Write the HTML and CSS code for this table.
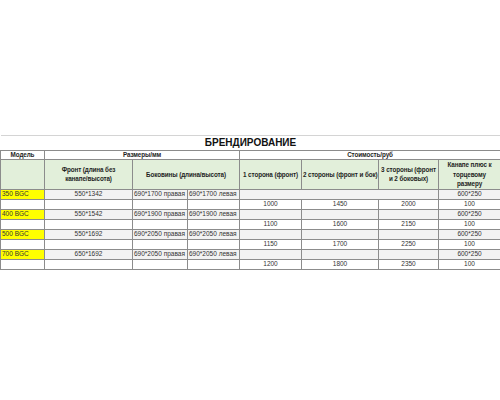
FILE: index.html
```html
<!DOCTYPE html>
<html>
<head>
<meta charset="utf-8">
<link rel="stylesheet" href="styles.css">
</head>
<body>
<div class="page">
<table class="sheet">
<colgroup>
<col class="c1"><col class="c2"><col class="c3"><col class="c4"><col class="c5"><col class="c6"><col class="c7"><col class="c8">
</colgroup>
<tr class="r-title"><td colspan="8" class="title">БРЕНДИРОВАНИЕ</td></tr>
<tr class="r-h1">
<td class="h">Модель</td>
<td class="h" colspan="3">Размеры/мм</td>
<td class="h" colspan="4">Стоимость/руб</td>
</tr>
<tr class="r-h2">
<td class="h g"></td>
<td class="h g">Фронт (длина без<br>канапе/высота)</td>
<td class="h g" colspan="2">Боковины (длина/высота)</td>
<td class="h g">1 сторона (фронт)</td>
<td class="h g">2 стороны (фронт и бок)</td>
<td class="h g">3 стороны (фронт<br>и 2 боковых)</td>
<td class="h g">Канапе плюс к<br>торцевому<br>размеру</td>
</tr>
<tr class="r-a">
<td class="m">350 BGC</td><td class="s c">550*1342</td><td class="s l">690*1700 правая</td><td class="s l">690*1700 левая</td><td class="s" colspan="3"></td><td class="s c">600*250</td>
</tr>
<tr class="r-b">
<td></td><td></td><td></td><td></td><td class="c">1000</td><td class="c">1450</td><td class="c lo">2000</td><td class="c">100</td>
</tr>
<tr class="r-a">
<td class="m">400 BGC</td><td class="s c">550*1542</td><td class="s l">690*1900 правая</td><td class="s l">690*1900 левая</td><td class="s"></td><td class="s"></td><td class="s"></td><td class="s c">600*250</td>
</tr>
<tr class="r-b">
<td></td><td></td><td></td><td></td><td class="c">1100</td><td class="c">1600</td><td class="c lo">2150</td><td class="c">100</td>
</tr>
<tr class="r-a">
<td class="m">500 BGC</td><td class="s c">550*1692</td><td class="s l">690*2050 правая</td><td class="s l">690*2050 левая</td><td class="s"></td><td class="s"></td><td class="s"></td><td class="s c">600*250</td>
</tr>
<tr class="r-b">
<td></td><td></td><td></td><td></td><td class="c">1150</td><td class="c">1700</td><td class="c lo">2250</td><td class="c">100</td>
</tr>
<tr class="r-a">
<td class="m">700 BGC</td><td class="s c">650*1692</td><td class="s l">690*2050 правая</td><td class="s l">690*2050 левая</td><td class="s"></td><td class="s"></td><td class="s"></td><td class="s c">600*250</td>
</tr>
<tr class="r-b">
<td></td><td></td><td></td><td></td><td class="c">1200</td><td class="c">1800</td><td class="c lo">2350</td><td class="c">100</td>
</tr>
</table>
</div>
</body>
</html>
```
FILE: styles.css
```css
html, body {
  margin: 0;
  padding: 0;
  background: #ffffff;
}
.page {
  width: 500px;
  height: 400px;
  padding-top: 135px;
  box-sizing: border-box;
}
.sheet {
  width: 500px;
  border-collapse: collapse;
  table-layout: fixed;
  font-family: "Liberation Sans", Arial, sans-serif;
  font-size: 6.5px;
  color: #333333;
}
.c1 { width: 44px; }
.c2 { width: 88px; }
.c3 { width: 55px; }
.c4 { width: 52px; }
.c5 { width: 62px; }
.c6 { width: 77px; }
.c7 { width: 60px; }
.c8 { width: 62px; }
.sheet td {
  border: 1px solid #8c8c8c;
  padding: 0 1px;
  line-height: 8px;
  white-space: nowrap;
  overflow: hidden;
  vertical-align: middle;
}
.r-title td {
  border: none;
  border-top: 1px solid #d4d4d4;
  height: 14px;
}
.title {
  text-align: center;
  font-size: 10px;
  font-weight: bold;
  color: #111;
  line-height: 14px;
}
.r-h1 td { height: 8px; }
.r-h2 td { height: 27px; }
.h {
  font-weight: bold;
  text-align: center;
  color: #1e1e1e;
  font-size: 6.3px;
  letter-spacing: -0.1px;
}
.r-h2 .h { line-height: 9.5px; }
.g { background: #e2efda; }
.r-a td { height: 9px; }
.r-b td { height: 9px; }
.m {
  background: #ffff00;
  text-align: left;
}
.s { background: #f2f2f2; }
.c { text-align: center; }
.l { text-align: left; }
.lo { vertical-align: bottom; }
```
